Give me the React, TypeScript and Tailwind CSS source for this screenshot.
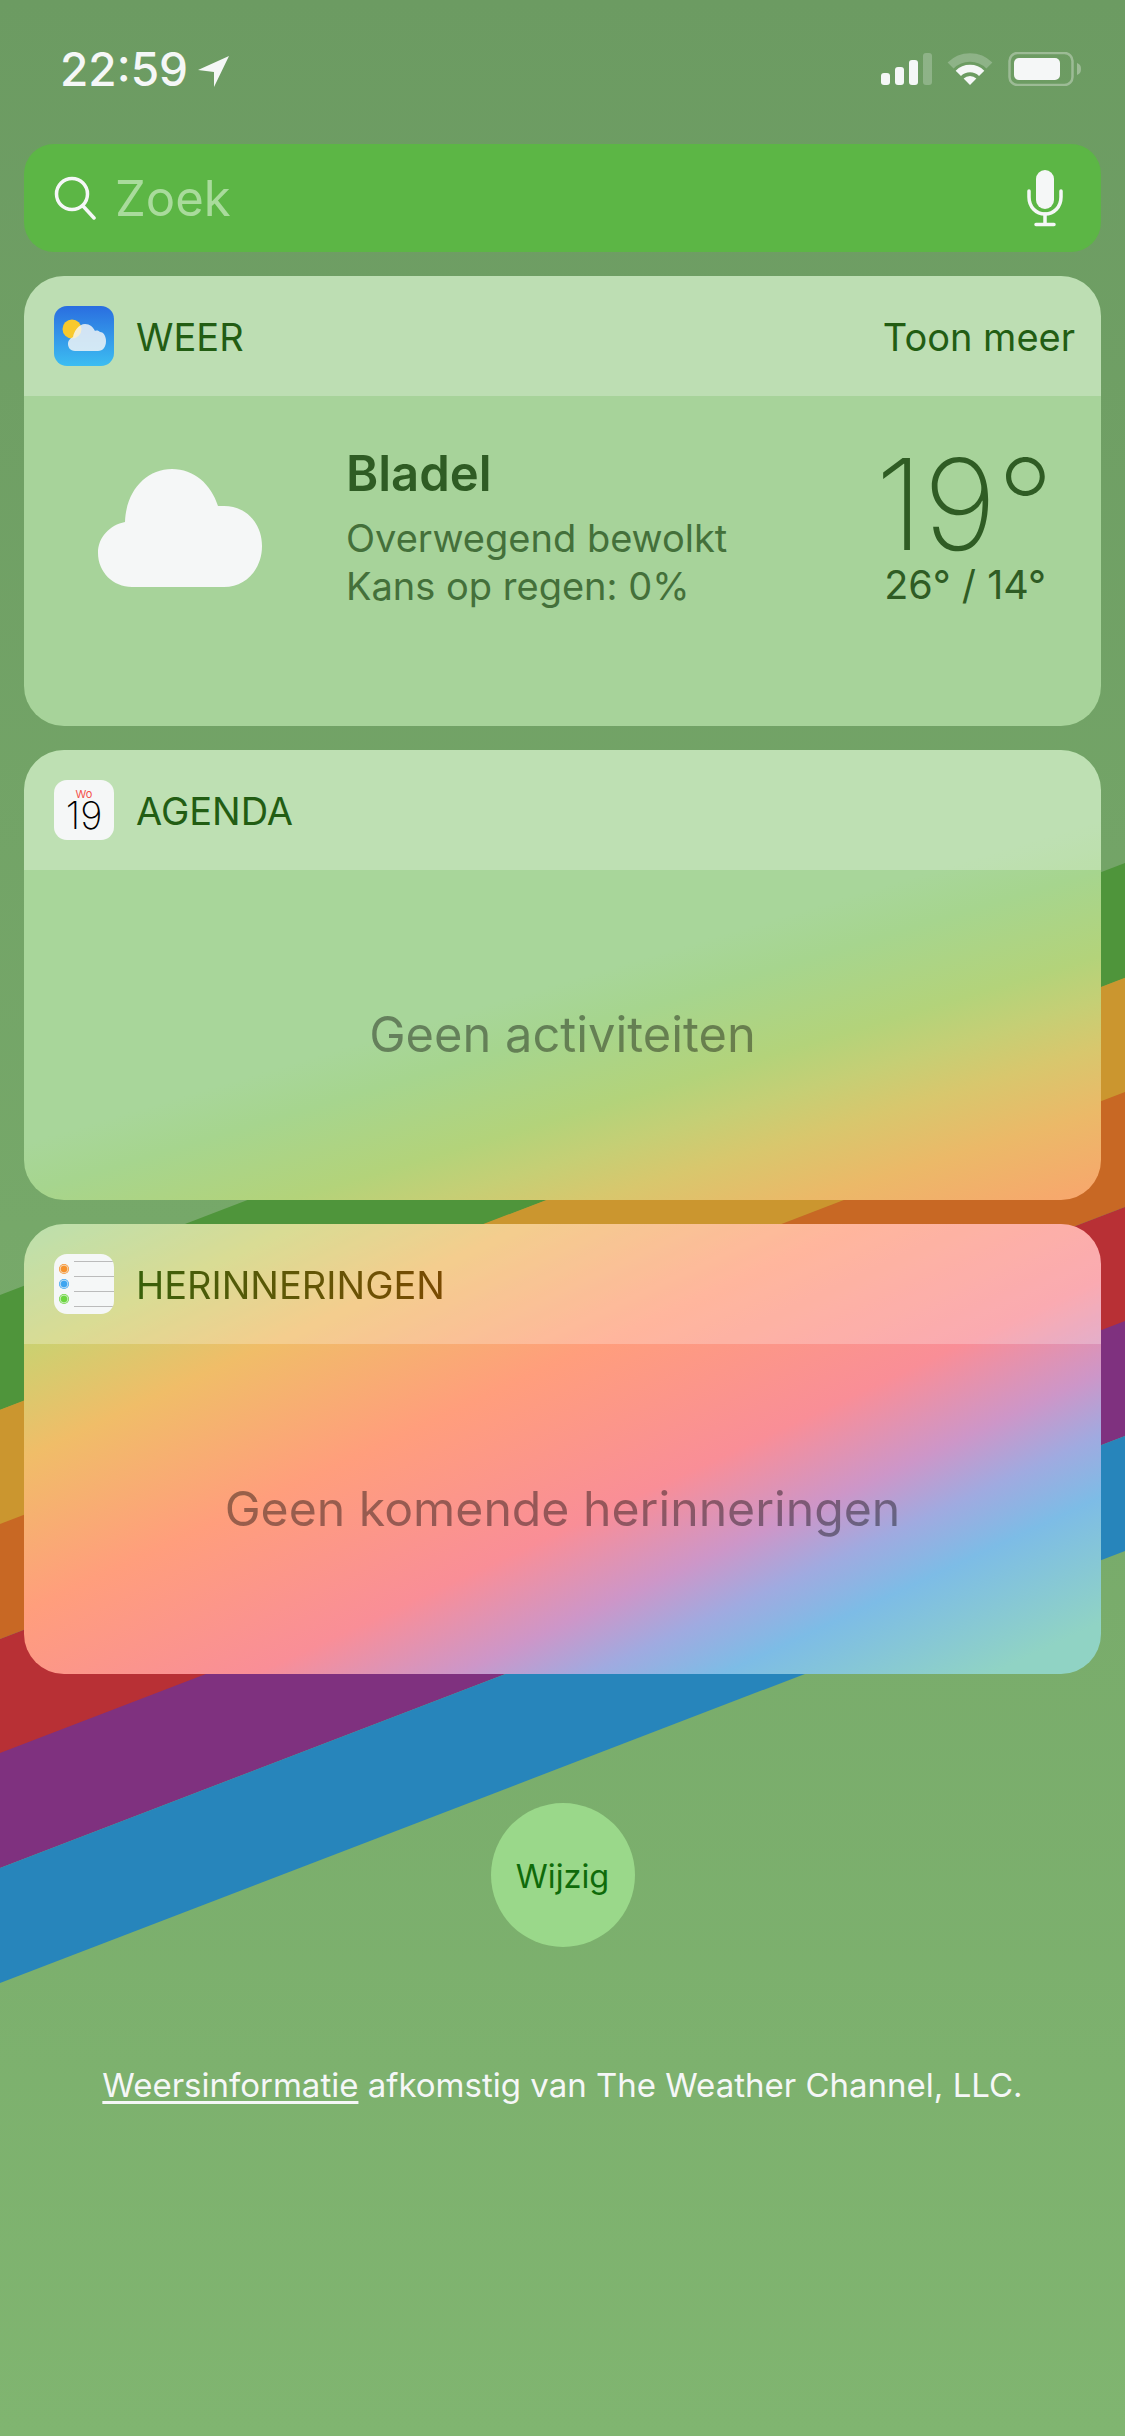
const font = "font-['Inter',sans-serif]";

function Wallpaper() {
  const stripes = [
    { y: 1295, fill: "#4f953b" },
    { y: 1409.7, fill: "#cb962f" },
    { y: 1524, fill: "#c86824" },
    { y: 1639, fill: "#b83035" },
    { y: 1753, fill: "#7f317f" },
    { y: 1868, fill: "#2785bb" },
  ];
  return (
    <svg className="absolute inset-0" width="1125" height="2436" viewBox="0 0 1125 2436">
      {stripes.map((s) => (
        <polygon
          key={s.fill}
          fill={s.fill}
          points={`0,${s.y} 1125,${s.y - 432} 1125,${s.y - 432 + 115} 0,${s.y + 115}`}
        />
      ))}
    </svg>
  );
}

function StatusBar() {
  return (
    <div className="flex h-[144px] items-start justify-between pl-[60px] pr-[44px] pt-[52px]">
      <div className="flex items-start">
        <span className="text-[46px] font-medium leading-[34px] text-[#f5f7f7]">22:59</span>
        <svg className="ml-[10px] mt-[4px]" width="32" height="32" viewBox="0 0 32 32">
          <path d="M31 0 L0 14 L16 16 L16 31 Z" fill="#f5f7f7" />
        </svg>
      </div>
      <svg width="200" height="34" viewBox="0 0 200 34">
        <rect x="0" y="21" width="9" height="12" rx="3" fill="#f5f7f7" />
        <rect x="14" y="15" width="9" height="18" rx="3" fill="#f5f7f7" />
        <rect x="28" y="8" width="9" height="25" rx="3" fill="#f5f7f7" />
        <rect x="42" y="1" width="9" height="32" rx="3" fill="#f5f7f7" opacity="0.25" />
        <path d="M69.6 13.6 A27.5 27.5 0 0 1 108.4 13.6" fill="none" stroke="#f5f7f7" strokeWidth="8.5" opacity="0.25" />
        <path d="M77.33 21.33 A16.5 16.5 0 0 1 100.67 21.33" fill="none" stroke="#f5f7f7" strokeWidth="7.5" />
        <path d="M89 33 L82.6 26.6 A9 9 0 0 1 95.4 26.6 Z" fill="#f5f7f7" />
        <rect x="128.5" y="1" width="63" height="32" rx="8" fill="none" stroke="#f5f7f7" strokeWidth="2.5" opacity="0.35" />
        <rect x="133" y="6" width="46" height="22" rx="5" fill="#f5f7f7" />
        <path d="M196 11 C199 12 200 14 200 17 C200 20 199 22 196 23 Z" fill="#f5f7f7" opacity="0.35" />
      </svg>
    </div>
  );
}

function SearchBar() {
  return (
    <div className="mx-[24px] flex h-[108px] items-center rounded-[30px] bg-[#5cb645] pl-[30px] pr-[38px]">
      <svg width="42" height="44" viewBox="0 0 42 44" fill="none" stroke="#f5f7f7" strokeWidth="3.5" strokeLinecap="round">
        <circle cx="18" cy="18" r="15.5" />
        <path d="M29 30 L40 42" />
      </svg>
      <span className="ml-[19px] flex-1 text-[49px] leading-none text-[#a9db9c]">Zoek</span>
      <svg width="36" height="58" viewBox="0 0 36 58" fill="none" stroke="#f5f7f7" strokeWidth="3.5" strokeLinecap="round">
        <rect x="9" y="1" width="18" height="39" rx="9" fill="#f5f7f7" stroke="none" />
        <path d="M2 22 L2 28 C2 38 9 45 18 45 C27 45 34 38 34 28 L34 22" />
        <path d="M18 45 L18 55 M9 55.5 L27 55.5" />
      </svg>
    </div>
  );
}

function WeatherIcon() {
  return (
    <svg width="60" height="60" viewBox="0 0 60 60" className="rounded-[13px]">
      <defs>
        <linearGradient id="sky" x1="0" y1="0" x2="0" y2="1">
          <stop offset="0" stopColor="#2a6ee0" />
          <stop offset="1" stopColor="#3cbdf1" />
        </linearGradient>
      </defs>
      <rect width="60" height="60" fill="url(#sky)" />
      <circle cx="18" cy="23" r="9.5" fill="#f8c92d" />
      <path
        d="M21 45 C16 45 14 41 14 38 C14 34 17 32 19 31 C20 25 25 18 31 18 C36 18 39 21 41 25 C43 24 45 25 46 26 C50 26 52 31 52 35 C52 41 49 45 44 45 Z"
        fill="#f5f7f7"
        opacity="0.82"
      />
    </svg>
  );
}

function CalendarIcon() {
  return (
    <div className="flex h-[60px] w-[60px] flex-col items-center rounded-[13px] bg-[#f5f7f7] pt-[8px]">
      <span className="text-[11px] leading-[12px] text-[#f4504c]">Wo</span>
      <span className="text-[38px] font-extralight leading-[30px] text-black">19</span>
    </div>
  );
}

function RemindersIcon() {
  const dots = [
    { y: 15, fill: "#f6922d" },
    { y: 30, fill: "#3da5f0" },
    { y: 45, fill: "#6cd640" },
  ];
  return (
    <svg width="60" height="60" viewBox="0 0 60 60" className="rounded-[13px]">
      <rect width="60" height="60" fill="#f5f7f7" />
      {[7, 22, 37, 52].map((y) => (
        <rect key={y} x="20" y={y} width="40" height="1" fill="#bbbbbb" />
      ))}
      {dots.map((d) => (
        <g key={d.y}>
          <circle cx="10" cy={d.y} r="5" fill={d.fill} />
          <circle cx="10" cy={d.y} r="3.9" fill="none" stroke="#f5f7f7" strokeWidth="0.7" />
        </g>
      ))}
    </svg>
  );
}

function Card({
  icon,
  title,
  right,
  className,
  children,
}: {
  icon: React.ReactNode;
  title: React.ReactNode;
  right?: string;
  className: string;
  children: React.ReactNode;
}) {
  return (
    <div className={`mx-[24px] h-[450px] overflow-hidden rounded-[40px] ${className}`}>
      <div className="flex h-[120px] items-center bg-white/25 pl-[30px] pr-[26px]">
        {icon}
        <div className="ml-[22px] flex-1 pt-[1px] text-[38px] leading-none text-[#225d13]">{title}</div>
        {right && <span className="pt-[1px] text-[38px] leading-none text-[#225d13]">{right}</span>}
      </div>
      {children}
    </div>
  );
}

function Empty({ text, className }: { text: string; className: string }) {
  return (
    <div className={`flex h-[330px] items-center justify-center pt-[1px] leading-none text-black/40 ${className}`}>
      {text}
    </div>
  );
}

export default function App() {
  return (
    <div className={`relative h-[2436px] overflow-hidden bg-linear-to-b from-[#6c9b62] to-[#80b570] ${font}`}>
      <Wallpaper />
      <div className="relative">
        <StatusBar />
        <SearchBar />
        <div className="mt-[24px] flex flex-col gap-[24px]">
          <Card icon={<WeatherIcon />} title="WEER" right="Toon meer" className="bg-[#a7d39a]">
            <div className="flex pl-[74px] pr-[47px] pt-[73px]">
              <svg width="164" height="118" viewBox="0 0 164 118" className="shrink-0">
                <path
                  d="M27 53 C28 22 48 0 74 0 C96 0 113 15 120 37 L126 37 C148 37 164 54 164 77 C164 100 148 118 126 118 L34 118 C15 118 0 103 0 84 C0 68 12 56 27 53 Z"
                  fill="#f5f7f7"
                />
              </svg>
              <div className="ml-[84px] mt-[-23px] flex-1">
                <div className="text-[49px] font-semibold leading-[56px] text-[#2f5c24]">Bladel</div>
                <div className="mt-[12px] text-[38px] leading-[48px] text-[#44703a]">Overwegend bewolkt</div>
                <div className="text-[38px] leading-[48px] text-[#44703a]">Kans op regen: 0%</div>
              </div>
              <div className="mt-[-15px] flex flex-col items-end">
                <div className="text-[126px] font-extralight leading-[100px] text-[#2f5c24]">19°</div>
                <div className="mr-[8px] mt-[7px] text-[39.5px] leading-[48px] text-[#2f5c24]">26° / 14°</div>
              </div>
            </div>
          </Card>
          <Card
            icon={<CalendarIcon />}
            title="AGENDA"
            className="bg-fixed bg-[linear-gradient(163.3deg,#a8d69a_1102px,#a6d58e_1150px,#b3d37a_1232px,#c5cf75_1274px,#d8c76d_1319px,#ebb968_1380px,#f6a96c_1449px,#fd9d77_1533px)]"
          >
            <Empty text="Geen activiteiten" className="text-[48.8px]" />
          </Card>
          <Card
            icon={<RemindersIcon />}
            title={
              <span className="bg-linear-to-r from-[#37600a] to-[#7a4a02] bg-clip-text text-transparent">
                HERINNERINGEN
              </span>
            }
            className="bg-fixed bg-[linear-gradient(155deg,#a8d590_1130px,#cdd070_1237px,#f0bd68_1331px,#ff9e7c_1470px,#f98e97_1625px,#cd96c8_1710px,#a0aae0_1766px,#7dbce6_1822px,#90d3c4_1936px)]"
          >
            <Empty text="Geen komende herinneringen" className="text-[48.2px]" />
          </Card>
        </div>
        <div className="mt-[129px] flex justify-center">
          <button className="flex h-[144px] w-[144px] items-center justify-center rounded-full bg-[#9ad88a] pt-[4px] text-[32.5px] text-[#0f6b0a]">
            Wijzig
          </button>
        </div>
        <p className="mt-[118px] text-center text-[33px] leading-[40px] text-[#f5f7f7]">
          <span className="underline underline-offset-4">Weersinformatie</span> afkomstig van The Weather Channel, LLC.
        </p>
      </div>
    </div>
  );
}
